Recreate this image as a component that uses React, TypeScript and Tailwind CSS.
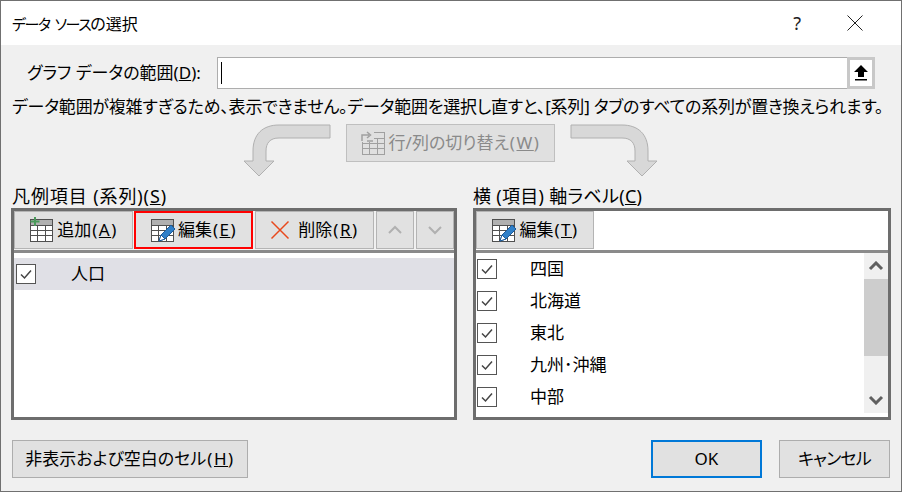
const FONT = "font-['Noto_Sans','Noto_Sans_CJK_JP',sans-serif] [font-feature-settings:'palt']";

function Grid({ pen = false, plus = false, muted = false }: { pen?: boolean; plus?: boolean; muted?: boolean }) {
  const c = muted ? "#a0a0a0" : "#505050";
  return (
    <svg width="26" height="26" viewBox="0 0 26 26" className="shrink-0">
      <rect x="1.5" y="2.5" width="22" height="22" fill={muted ? "none" : "#fff"} stroke={c} />
      {!muted && <rect x="2" y="3" width="21" height="5" fill="#b0b0b0" />}
      <path d="M1.5 8.5H23.5M1.5 13.5H23.5M1.5 18.5H23.5M8.5 8V24M16.5 8V24" stroke={c} fill="none" />
      {plus && <path d="M6 0V9M1.5 4.5H10.5" stroke="#4a9a5a" strokeWidth="2" fill="none" />}
      {muted && (
        <>
          <rect x="0" y="0" width="13" height="12" fill="#e0e0e0" />
          <path d="M1 11V5H8M6 2L9.5 5L6 8M12 11H6" stroke="#a0a0a0" strokeWidth="1.5" fill="none" />
        </>
      )}
      {pen && (
        <>
          <path d="M9 24L11 18L21 8L25 12L15 22Z" fill="#2f7fc8" stroke="#1c5a99" />
          <path d="M11 18L15 22L9 24Z" fill="#fff" stroke="#1c5a99" />
        </>
      )}
    </svg>
  );
}

function Check() {
  return (
    <span className="flex h-5 w-5 shrink-0 items-center justify-center border border-[#555] bg-white">
      <svg width="14" height="14" viewBox="0 0 14 14">
        <path d="M2 7.5L5.5 11L12 3.5" fill="none" stroke="#444" strokeWidth="1.5" />
      </svg>
    </span>
  );
}

// mnemonic suffix, e.g. (E) - wider than the plain latin face
function Key({ k }: { k: string }) {
  return (
    <span className="ml-px tracking-[1.5px]">
      (<u>{k}</u>)
    </span>
  );
}

function ToolButton({ children, className = "" }: { children: React.ReactNode; className?: string }) {
  return (
    <div className={`flex h-[38px] items-center justify-center border border-[#b4b4b4] bg-[#e1e1e1] text-black ${className}`}>
      {children}
    </div>
  );
}

function Arrow({ flip = false }: { flip?: boolean }) {
  return (
    <svg width="88" height="54" viewBox="0 0 88 54" className={flip ? "-scale-x-100" : ""}>
      <path
        d="M87 1V14H36C27 14 23 19 23 27V37H31L16 52L1 37H10V27C10 10 20 1 36 1Z"
        fill="#d8d8d8"
        stroke="#b0b0b0"
      />
    </svg>
  );
}

function Chevron({ up = false, color, width = 2 }: { up?: boolean; color: string; width?: number }) {
  return (
    <svg width="16" height="10" viewBox="0 0 16 10">
      <path d={up ? "M2 8L8 2L14 8" : "M2 2L8 8L14 2"} fill="none" stroke={color} strokeWidth={width} />
    </svg>
  );
}

const categories = ["四国", "北海道", "東北", "九州･沖縄", "中部"];

export default function App() {
  return (
    <div className={`flex h-[492px] w-[902px] flex-col border border-[#707070] bg-[#f0f0f0] text-[17px] leading-[20px] text-black ${FONT}`}>
      {/* title bar */}
      <div className="flex h-[44px] shrink-0 items-center bg-white pl-[11px]">
        <span className="flex-1 pt-px text-[16px]">
          <span className="text-[15px] tracking-[-1.5px] [word-spacing:3px]">データ ソース</span>の選択
        </span>
        <span className="mr-[46px] text-[18px] text-[#222]">?</span>
        <svg width="16" height="16" viewBox="0 0 16 16" className="mr-[38px]">
          <path d="M0.5 0.5L15.5 15.5M15.5 0.5L0.5 15.5" stroke="#222" />
        </svg>
      </div>

      {/* range row */}
      <div className="mt-3 flex h-[32px] items-center pl-[26px] pr-[26px]">
        <span className="w-[190px] shrink-0">
          グラフ データの範囲(<u>D</u>):
        </span>
        <div className="flex h-[32px] flex-1 items-stretch border border-[#adadad] bg-white">
          <div className="ml-[3px] my-[4px] w-px bg-black" />
          <div className="ml-auto flex w-[28px] items-center justify-center border-[3px] border-[#c8c8c8] bg-white -my-px -mr-px">
            <svg width="14" height="16" viewBox="0 0 14 16">
              <path d="M7 0L14 7H10V12H4V7H0Z" fill="#000" />
              <rect x="1" y="14" width="12" height="1.5" fill="#000" />
            </svg>
          </div>
        </div>
      </div>

      <p className="mt-[8px] whitespace-nowrap pl-[11px] tracking-[-0.22px]">
        データ範囲が複雑すぎるため、表示できません。データ範囲を選択し直すと、[系列] タブのすべての系列が置き換えられます。
      </p>

      {/* switch row */}
      <div className="mt-[7px] flex h-[54px] items-start pl-[242px]">
        <Arrow />
        <div className="ml-[15px] flex h-[38px] w-[209px] items-center justify-center gap-0.5 border border-[#bfbfbf] bg-[#e0e0e0] text-[#8a8a8a]">
          <Grid muted />
          <span>
            行/列の切り替え
            <Key k="W" />
          </span>
        </div>
        <div className="ml-[15px]">
          <Arrow flip />
        </div>
      </div>

      {/* two lists */}
      <div className="mt-[8px] flex gap-[16px] pl-[10px]">
        <div className="w-[446px]">
          <div className="h-[22px] pl-px text-[18px] tracking-[0.9px]">
            凡例項目 (系列)(<u>S</u>)
          </div>
          <div className="h-[212px] border-[3px] border-[#6d6d6d] bg-white">
            <div className="flex h-[42px] items-start gap-[2px] border-b-[3px] border-[#8a8a8a] bg-[#f0f0f0]">
              <ToolButton className="w-[119px] gap-0.5">
                <Grid plus />
                <span>
                  追加
                  <Key k="A" />
                </span>
              </ToolButton>
              <ToolButton className="-ml-px w-[119px] gap-0.5 border-2 border-[#ff0000]">
                <Grid pen />
                <span>
                  編集
                  <Key k="E" />
                </span>
              </ToolButton>
              <ToolButton className="w-[119px] gap-2">
                <svg width="20" height="20" viewBox="0 0 20 20">
                  <path d="M1.5 1.5L18.5 18.5M18.5 1.5L1.5 18.5" stroke="#e8491d" strokeWidth="1.5" />
                </svg>
                <span>
                  削除
                  <Key k="R" />
                </span>
              </ToolButton>
              <ToolButton className="w-[38px]">
                <Chevron up color="#b0b0b0" />
              </ToolButton>
              <ToolButton className="w-[38px]">
                <Chevron color="#b0b0b0" />
              </ToolButton>
            </div>
            <div className="mt-[5px] flex h-[32px] items-center bg-[#e0e0e6] pl-[2px]">
              <Check />
              <span className="ml-[35px]">人口</span>
            </div>
          </div>
        </div>

        <div className="w-[418px]">
          <div className="h-[22px] text-[18px] tracking-[0.3px]">
            横 (項目) 軸ラベル(<u>C</u>)
          </div>
          <div className="h-[212px] border-[3px] border-[#6d6d6d] bg-white">
            <div className="flex h-[42px] items-start border-b-[3px] border-[#8a8a8a] bg-white">
              <ToolButton className="w-[118px] gap-0.5">
                <Grid pen />
                <span>
                  編集
                  <Key k="T" />
                </span>
              </ToolButton>
            </div>
            <div className="flex">
              <div className="flex-1">
                {categories.map((name) => (
                  <div key={name} className="flex h-[32px] items-center pl-[1px]">
                    <Check />
                    <span className="ml-[33px]">{name}</span>
                  </div>
                ))}
              </div>
              <div className="flex h-[160px] w-[24px] flex-col items-center bg-[#f0f0f0]">
                <div className="flex h-[26px] items-center justify-center">
                  <Chevron up color="#606060" width={3} />
                </div>
                <div className="h-[77px] w-full bg-[#cdcdcd]" />
                <div className="mt-auto flex h-[26px] items-center justify-center">
                  <Chevron color="#606060" width={3} />
                </div>
              </div>
            </div>
          </div>
        </div>
      </div>

      {/* footer */}
      <div className="mt-[20px] flex h-[38px] pl-[11px]">
        <div className="flex w-[236px] items-center justify-center border border-[#adadad] bg-[#e1e1e1]">
          <span>
            非表示および空白のセル
            <Key k="H" />
          </span>
        </div>
        <div className="ml-[403px] flex w-[111px] items-center justify-center border-2 border-[#0078d7] bg-[#e1e1e1]">
          OK
        </div>
        <div className="ml-[17px] flex w-[111px] items-center justify-center border border-[#adadad] bg-[#e1e1e1] tracking-[-0.8px]">
          キャンセル
        </div>
      </div>
    </div>
  );
}
